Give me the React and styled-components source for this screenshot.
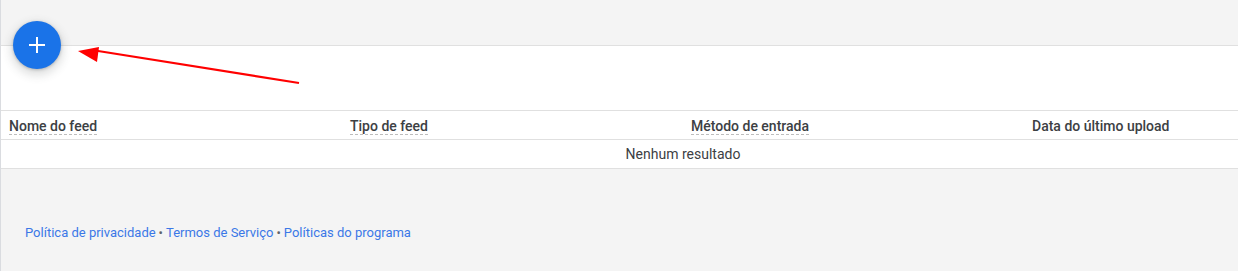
import React from 'react';
import styled, { createGlobalStyle } from 'styled-components';

const GlobalStyle = createGlobalStyle`
  html, body {
    margin: 0;
    padding: 0;
    background: #f4f4f4;
    font-family: Roboto, "Liberation Sans", Arial, sans-serif;
  }
`;

const columns = [
  { label: 'Nome do feed', hint: true },
  { label: 'Tipo de feed', hint: true },
  { label: 'Método de entrada', hint: true },
  { label: 'Data do último upload', hint: false },
];

const links = ['Política de privacidade', 'Termos de Serviço', 'Políticas do programa'];

const App = () => (
  <Page>
    <GlobalStyle />
    <TopBar />
    <Panel>
      <Fab aria-label="Adicionar">
        <svg width="18" height="18" viewBox="0 0 18 18">
          <path d="M9 1v16M1 9h16" stroke="#fff" strokeWidth="2" fill="none" />
        </svg>
      </Fab>
      <Arrow width="240" height="50" viewBox="0 0 240 50">
        <line x1="18" y1="3.5" x2="222" y2="36" stroke="#ff0000" strokeWidth="2.2" />
        <polygon points="0,1 21,-3 19,12" fill="#ff0000" transform="translate(1,3)" />
      </Arrow>
      <Spacer />
      <Table>
        <HeaderRow>
          {columns.map((col) => (
            <Cell key={col.label}>
              <HeaderLabel hint={col.hint ? 1 : 0}>{col.label}</HeaderLabel>
            </Cell>
          ))}
        </HeaderRow>
        <EmptyRow>Nenhum resultado</EmptyRow>
      </Table>
    </Panel>
    <Footer>
      {links.map((link, i) => (
        <React.Fragment key={link}>
          {i > 0 && <Dot>•</Dot>}
          <FooterLink href="#">{link}</FooterLink>
        </React.Fragment>
      ))}
    </Footer>
  </Page>
);

export default App;

// Styling
const Page = styled.div`
  min-height: 271px;
  border-left: 1px solid #dadce0;
  box-sizing: border-box;
  overflow: hidden;
`;

const TopBar = styled.div`
  height: 45px;
  background: #f4f4f4;
`;

const Panel = styled.div`
  position: relative;
  background: #fff;
  border-top: 1px solid #e0e0e0;
`;

const Fab = styled.button`
  position: absolute;
  top: -25px;
  left: 12px;
  width: 48px;
  height: 48px;
  border: none;
  border-radius: 50%;
  background: #1a73e8;
  box-shadow: 0 1px 3px rgba(60, 64, 67, 0.3), 0 4px 8px 3px rgba(60, 64, 67, 0.15);
  display: flex;
  align-items: center;
  justify-content: center;
  padding: 0;
  cursor: pointer;
`;

const Arrow = styled.svg`
  position: absolute;
  top: 1px;
  left: 76px;
  overflow: visible;
`;

const Spacer = styled.div`
  height: 64px;
`;

const Table = styled.div`
  width: 1364px;
`;

const HeaderRow = styled.div`
  display: grid;
  grid-template-columns: repeat(4, 341px);
  height: 28px;
  border-top: 1px solid #e0e0e0;
  border-bottom: 1px solid #e0e0e0;
`;

const Cell = styled.div`
  display: flex;
  align-items: center;
  padding: 2px 8px 0;
`;

const HeaderLabel = styled.span`
  font-size: 14px;
  font-weight: 500;
  color: #3c4043;
  line-height: 16px;
  border-bottom: 1px dashed ${(p) => (p.hint ? '#bdbdbd' : 'transparent')};
`;

const EmptyRow = styled.div`
  height: 28px;
  display: flex;
  align-items: center;
  justify-content: center;
  font-size: 14px;
  color: #3c4043;
  border-bottom: 1px solid #e0e0e0;
`;

const Footer = styled.div`
  padding: 56px 24px 0;
  font-size: 13px;
  display: flex;
  align-items: center;
`;

const FooterLink = styled.a`
  color: #3b78e7;
  text-decoration: none;
`;

const Dot = styled.span`
  color: #5f6368;
  margin: 0 3px;
`;
